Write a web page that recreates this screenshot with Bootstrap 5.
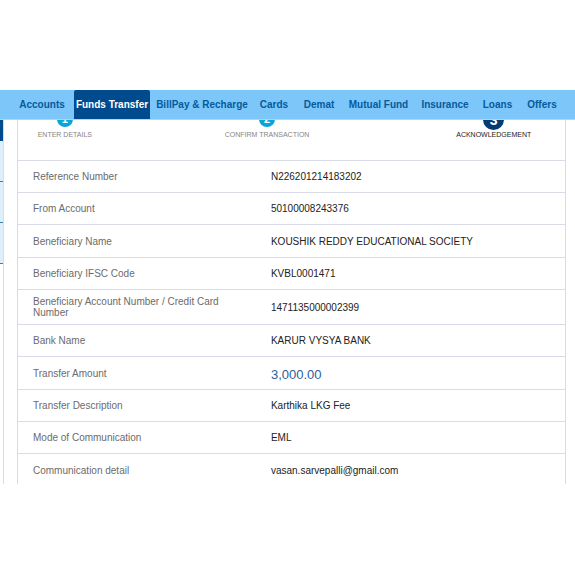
<!DOCTYPE html>
<html lang="en">
<head>
<meta charset="utf-8">
<meta name="viewport" content="width=device-width, initial-scale=1">
<title>Funds Transfer</title>
<link href="https://cdn.jsdelivr.net/npm/bootstrap@5.3.0/dist/css/bootstrap.min.css" rel="stylesheet">
<style>
body { font-family: "Liberation Sans", Arial, sans-serif; font-size: 10px; line-height: 12px; background: #fff; padding-top: 90px; color: #222; }
.bank-nav { display: grid; grid-template-columns: 64fr 76fr 104fr 40fr 50fr 69fr 64fr 41fr 48fr; height: 30px; padding: 0 9px 0 10px; background: #7cc6f9; border-bottom: 1px solid #a9d8f8; font-weight: 700; }
.bank-nav .nav-link { padding: 0; color: #075a9c; white-space: nowrap; display: flex; align-items: center; justify-content: center; }
.bank-nav .nav-link.active { background: #004b8d; color: #fff; border-radius: 2px 2px 0 0; }
.view-area { max-height: 364px; }
.side-strip { width: 4px; border-right: 1px solid #d9dbe8; }
.side-strip div { height: 41px; background: #deeefb; border-bottom: 1px solid #3f7fae; }
.side-strip .side-head { height: 21px; background: #004b8d; border: 0; }
.detail-panel { margin: 0 9px 0 13px; border: solid #d9dbe8; border-width: 0 1px; }
.steps { display: grid; grid-template-columns: 94fr 312fr 143fr; height: 40px; font-size: 7px; line-height: 10px; color: #858585; text-align: center; }
.step-top { height: 10px; }
.step-dot { width: 16px; height: 16px; margin-bottom: 3px; background: #0ba4d6; color: #fff; font-size: 11px; font-weight: 700; flex: none; }
.current-step { color: #222; }
.current-step .step-dot { width: 21px; height: 21px; margin-bottom: 0; background: #043c72; font-size: 14px; }
.details { height: 326px; color: #222; line-height: 11px; }
.details th, .details td { height: 32px; padding: 0 16px 0 15px; border-top: 1px solid #d9dbe8; vertical-align: middle; }
.details th { width: 43.5%; padding-right: 28px; font-weight: 400; color: #6b6b6b; }
.details .long-row th { height: 35px; }
.details .amount { font-size: 13px; color: #2c609b; padding-top: 2px; }
</style>
<script src="https://cdn.jsdelivr.net/npm/bootstrap@5.3.0/dist/js/bootstrap.bundle.min.js"></script>
</head>
<body>
<nav class="bank-nav" aria-label="Main">
  <a class="nav-link" href="#">Accounts</a>
  <a class="nav-link active" aria-current="page" href="#">Funds Transfer</a>
  <a class="nav-link" href="#">BillPay &amp; Recharge</a>
  <a class="nav-link" href="#">Cards</a>
  <a class="nav-link" href="#">Demat</a>
  <a class="nav-link" href="#">Mutual Fund</a>
  <a class="nav-link" href="#">Insurance</a>
  <a class="nav-link" href="#">Loans</a>
  <a class="nav-link" href="#">Offers</a>
</nav>
<div class="view-area d-flex overflow-hidden">
  <aside class="side-strip flex-shrink-0">
    <div class="side-head"></div><div></div><div></div><div></div>
  </aside>
  <main class="detail-panel flex-grow-1">
    <div class="steps overflow-hidden">
      <div>
        <div class="step-top d-flex align-items-end justify-content-center"><span class="step-dot rounded-circle d-flex align-items-center justify-content-center">1</span></div>
        ENTER DETAILS
      </div>
      <div>
        <div class="step-top d-flex align-items-end justify-content-center"><span class="step-dot rounded-circle d-flex align-items-center justify-content-center">2</span></div>
        CONFIRM TRANSACTION
      </div>
      <div class="current-step">
        <div class="step-top d-flex align-items-end justify-content-center"><span class="step-dot rounded-circle d-flex align-items-center justify-content-center">3</span></div>
        ACKNOWLEDGEMENT
      </div>
    </div>
    <table class="details w-100">
      <tbody>
        <tr><th scope="row">Reference Number</th><td>N226201214183202</td></tr>
        <tr><th scope="row">From Account</th><td>50100008243376</td></tr>
        <tr><th scope="row">Beneficiary Name</th><td>KOUSHIK REDDY EDUCATIONAL SOCIETY</td></tr>
        <tr><th scope="row">Beneficiary IFSC Code</th><td>KVBL0001471</td></tr>
        <tr class="long-row"><th scope="row">Beneficiary Account Number / Credit Card Number</th><td>1471135000002399</td></tr>
        <tr><th scope="row">Bank Name</th><td>KARUR VYSYA BANK</td></tr>
        <tr><th scope="row">Transfer Amount</th><td class="amount">3,000.00</td></tr>
        <tr><th scope="row">Transfer Description</th><td>Karthika LKG Fee</td></tr>
        <tr><th scope="row">Mode of Communication</th><td>EML</td></tr>
        <tr><th scope="row">Communication detail</th><td>vasan.sarvepalli@gmail.com</td></tr>
      </tbody>
    </table>
  </main>
</div>
</body>
</html>
